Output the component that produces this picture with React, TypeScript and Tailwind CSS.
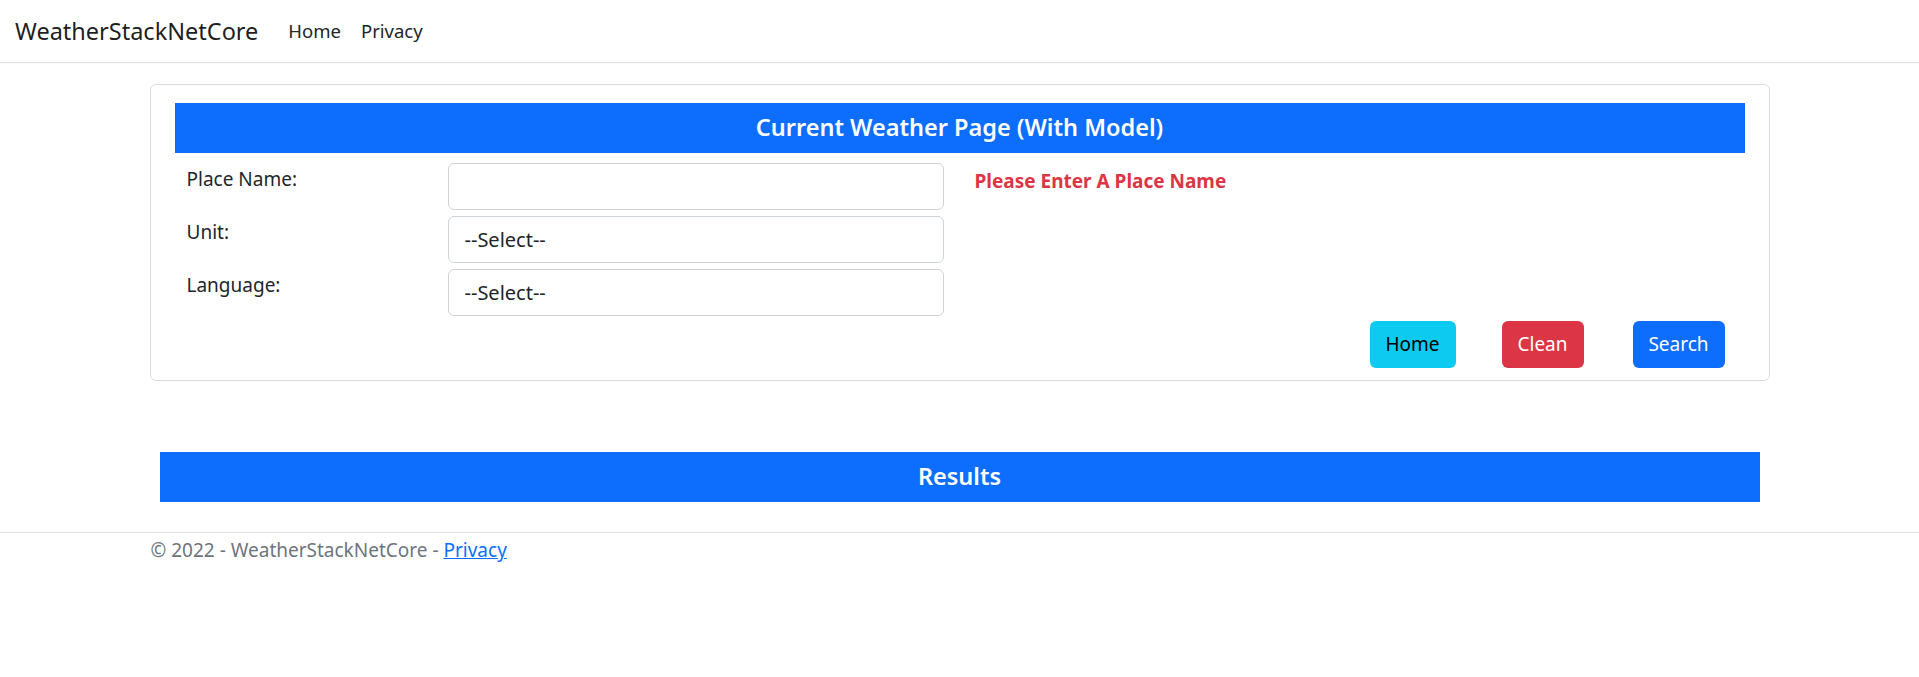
import { type ReactElement } from 'react';

const FONT = "font-['Noto_Sans',_'Open_Sans',_sans-serif]";

function FormRow({ label, children }: { label: string; children: ReactElement }): ReactElement {
  return (
    <div className="flex items-start h-[47px]">
      <label className="w-[273px] pl-[12px] pt-px text-[19px] leading-[30px] text-[#212529]">{label}</label>
      {children}
    </div>
  );
}

function SelectBox({ value }: { value: string }): ReactElement {
  return (
    <div className="w-[496px] h-[47px] border border-[#ced4da] rounded-[6px] bg-white px-[16px] flex items-center text-[20px] text-[#212529]">
      {value}
    </div>
  );
}

export default function App(): ReactElement {
  return (
    <div className={`${FONT} bg-white min-h-[677px] w-full`}>
      <nav className="h-[63px] border-b border-[#dee2e6] shadow-[0_1px_2px_rgba(0,0,0,0.03)] flex items-center px-[15px]">
        <span className="text-[23.5px] leading-[30px] text-[rgba(0,0,0,0.9)] mr-[20px]">WeatherStackNetCore</span>
        <a className="text-[18.5px] leading-[30px] text-[#212529] px-[10px]">Home</a>
        <a className="text-[18.5px] leading-[30px] text-[#212529] px-[10px]">Privacy</a>
      </nav>

      <main className="w-[1650px] mx-auto px-[15px] pt-[21px]">
        <div className="border border-[#d9dce0] rounded-[6px] pt-[18px] px-[24px] pb-[12px]">
          <div className="h-[50px] bg-[#0d6efd] flex items-center justify-center">
            <h5 className="text-white text-[23.5px] font-semibold">Current Weather Page (With Model)</h5>
          </div>

          <div className="flex mt-[10px]">
            <div className="flex flex-col gap-[6px]">
              <FormRow label="Place Name:">
                <input className="w-[496px] h-[47px] border border-[#ced4da] rounded-[6px] bg-white px-[16px] text-[20px] outline-none" />
              </FormRow>
              <FormRow label="Unit:">
                <SelectBox value="--Select--" />
              </FormRow>
              <FormRow label="Language:">
                <SelectBox value="--Select--" />
              </FormRow>
            </div>
            <div className="pl-[31px] pt-[3px]">
              <span className="text-[19px] leading-[30px] font-bold text-[#dc3545]">Please Enter A Place Name</span>
            </div>
          </div>

          <div className="flex justify-end mt-[5px] pr-[20px]">
            <button className="w-[86px] h-[47px] rounded-[6px] bg-[#0dcaf0] text-black text-[19px]">Home</button>
            <button className="ml-[46px] w-[82px] h-[47px] rounded-[6px] bg-[#dc3545] text-white text-[19px]">Clean</button>
            <button className="ml-[49px] w-[92px] h-[47px] rounded-[6px] bg-[#0d6efd] text-white text-[19px]">Search</button>
          </div>
        </div>

        <div className="mx-[10px] mt-[71px] h-[50px] bg-[#0d6efd] flex items-center justify-center">
          <h5 className="text-white text-[23.5px] font-semibold">Results</h5>
        </div>
      </main>

      <footer className="mt-[30px] border-t border-[#dee2e6]">
        <div className="w-[1650px] mx-auto px-[16px] pt-[2px] text-[19px] leading-[30px] text-[#6c757d]">
          © 2022 - WeatherStackNetCore - <a className="text-[#0d6efd] underline">Privacy</a>
        </div>
      </footer>
    </div>
  );
}
